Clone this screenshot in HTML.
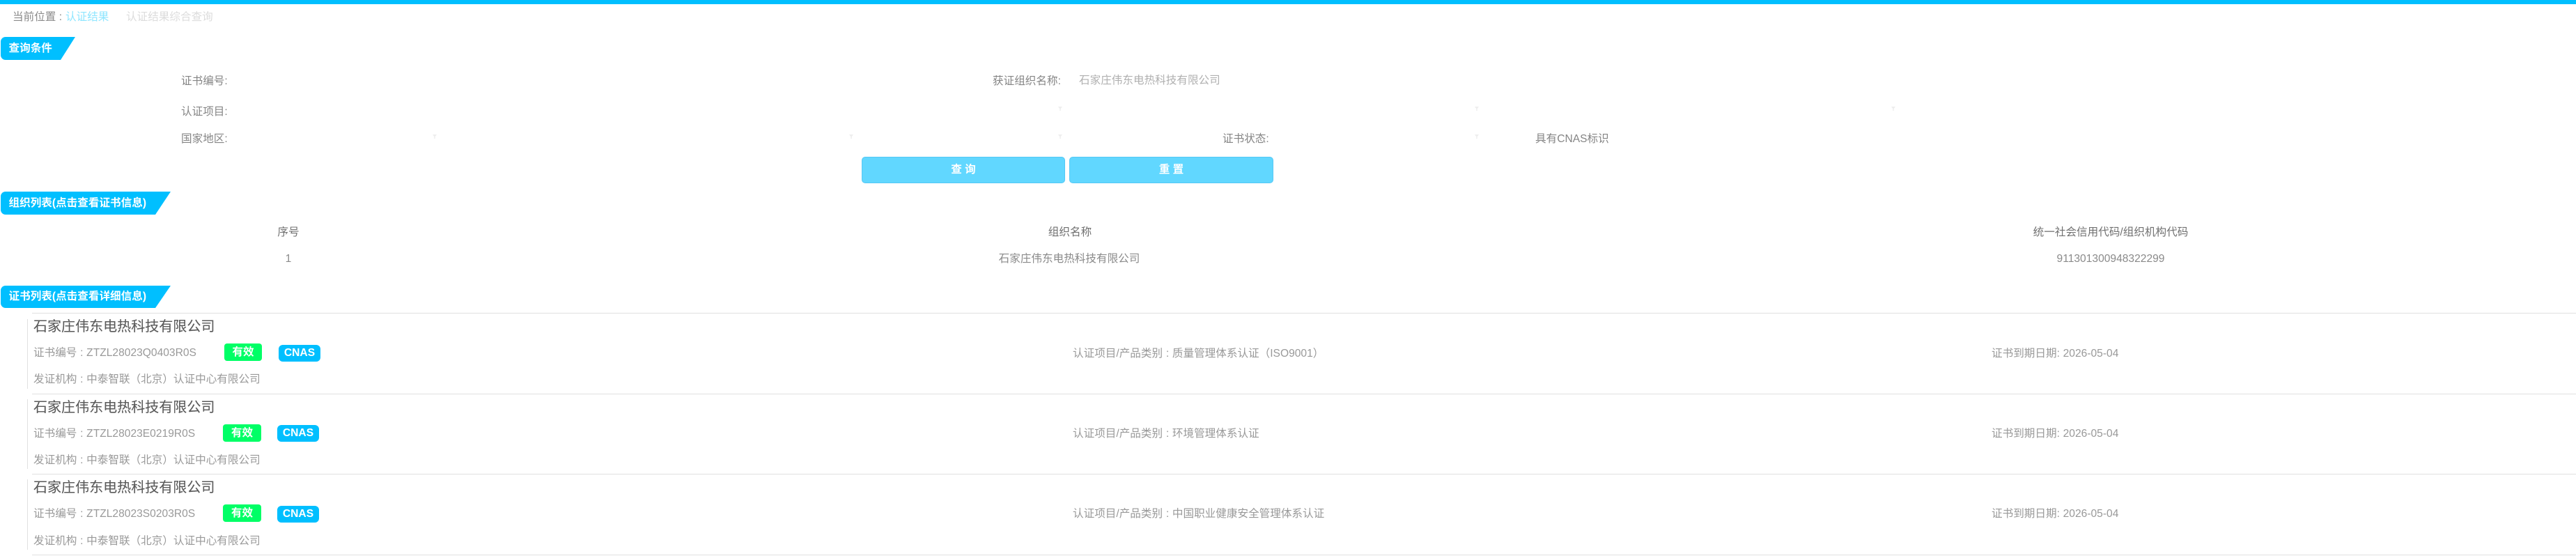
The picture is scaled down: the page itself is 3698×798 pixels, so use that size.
<!DOCTYPE html>
<html lang="zh-CN">
<head>
<meta charset="utf-8">
<title>认证结果综合查询</title>
<style>
html,body{margin:0;padding:0;background:#fff;}
body{position:relative;width:3698px;height:798px;overflow:hidden;font-family:"Liberation Sans","WenQuanYi Zen Hei","Noto Sans CJK SC",sans-serif;font-size:15.6px;color:#666;}
.t{position:absolute;white-space:nowrap;height:24px;line-height:24px;}
.c{transform:translateX(-50%);}
.lab{color:#858585;}
.h{position:absolute;background:#00bfff;color:#fff;font-weight:bold;height:33px;line-height:33px;left:1px;padding-left:11.5px;box-sizing:border-box;border-radius:7px 0 0 7px;white-space:nowrap;}
.btn{position:absolute;top:225px;height:38px;line-height:36px;box-sizing:border-box;background:#61d7ff;border:1px solid #55c8f5;border-radius:5px;color:#fff;font-weight:bold;text-align:center;font-size:15.6px;}
.ln{position:absolute;left:46px;right:0;height:1px;background:#e0e0e0;}
.lf{position:absolute;left:39px;width:1px;background:#e0e0e0;}
.ttl{font-size:20.05px;color:#5a5a5a;-webkit-text-stroke:.12px #5a5a5a;}
.row{color:#999;word-spacing:.4px;}
.g{position:absolute;background:#00ff66;color:#fff;font-weight:bold;border-radius:4px;text-align:center;height:25px;line-height:25px;font-size:15.6px;}
.b{position:absolute;background:#00bfff;color:#fff;font-weight:bold;border-radius:6px;text-align:center;height:24px;line-height:24px;font-size:15.6px;}
svg.f{position:absolute;width:6px;height:6px;}
</style>
</head>
<body>
<div style="position:absolute;left:0;top:0;width:3698px;height:6px;background:#00bfff"></div>

<div class="t" style="left:18px;top:13px;color:#8a8a8a">当前位置 :</div>
<div class="t" style="left:94px;top:13px;color:#8fe6ff">认证结果</div>
<div class="t" style="left:181px;top:13px;color:#dcdcdc">认证结果综合查询</div>

<div class="h" style="top:53px;width:107px;clip-path:polygon(0 0,100% 0,80.4% 100%,0 100%)">查询条件</div>

<div class="t lab" style="left:260px;top:105px">证书编号:</div>
<div class="t lab" style="left:260px;top:149px">认证项目:</div>
<div class="t lab" style="left:260px;top:188px">国家地区:</div>
<div class="t lab" style="left:1425px;top:105px">获证组织名称:</div>
<div class="t" style="left:1549px;top:104px;color:#b0b0b0">石家庄伟东电热科技有限公司</div>
<div class="t lab" style="left:1755px;top:188px">证书状态:</div>
<div class="t lab" style="left:2204px;top:188px">具有CNAS标识</div>

<svg class="f" style="left:621px;top:193px" viewBox="0 0 6 6"><path d="M0 0H6L3.8 3V6H2.2V3Z" fill="#eee"/></svg>
<svg class="f" style="left:1219px;top:193px" viewBox="0 0 6 6"><path d="M0 0H6L3.8 3V6H2.2V3Z" fill="#eee"/></svg>
<svg class="f" style="left:1519px;top:193px" viewBox="0 0 6 6"><path d="M0 0H6L3.8 3V6H2.2V3Z" fill="#eee"/></svg>
<svg class="f" style="left:2117px;top:193px" viewBox="0 0 6 6"><path d="M0 0H6L3.8 3V6H2.2V3Z" fill="#eee"/></svg>
<svg class="f" style="left:1519px;top:153px" viewBox="0 0 6 6"><path d="M0 0H6L3.8 3V6H2.2V3Z" fill="#eee"/></svg>
<svg class="f" style="left:2117px;top:153px" viewBox="0 0 6 6"><path d="M0 0H6L3.8 3V6H2.2V3Z" fill="#eee"/></svg>
<svg class="f" style="left:2715px;top:153px" viewBox="0 0 6 6"><path d="M0 0H6L3.8 3V6H2.2V3Z" fill="#eee"/></svg>

<div class="btn" style="left:1237px;width:292px">查 询</div>
<div class="btn" style="left:1535px;width:293px">重 置</div>

<div class="h" style="top:275px;width:244px;clip-path:polygon(0 0,100% 0,91% 100%,0 100%)">组织列表(点击查看证书信息)</div>

<div class="t c" style="left:414px;top:322px;color:#707070">序号</div>
<div class="t c" style="left:1536px;top:322px;color:#707070">组织名称</div>
<div class="t c" style="left:3030px;top:322px;color:#707070">统一社会信用代码/组织机构代码</div>
<div class="t c" style="left:414px;top:360px;color:#8a8a8a">1</div>
<div class="t c" style="left:1535px;top:360px;color:#8a8a8a">石家庄伟东电热科技有限公司</div>
<div class="t c" style="left:3030px;top:360px;color:#8a8a8a">911301300948322299</div>

<div class="h" style="top:410px;height:32px;line-height:32px;width:244px;clip-path:polygon(0 0,100% 0,91% 100%,0 100%)">证书列表(点击查看详细信息)</div>

<!-- card 1 -->
<div class="ln" style="top:449px"></div>
<div class="lf" style="top:458px;height:100px"></div>
<div class="t ttl" style="left:48px;top:457px">石家庄伟东电热科技有限公司</div>
<div class="t row" style="left:48px;top:495px">证书编号 : ZTZL28023Q0403R0S</div>
<div class="g" style="left:322px;top:493px;width:54px">有效</div>
<div class="b" style="left:400px;top:495px;width:60px">CNAS</div>
<div class="t row" style="left:1540px;top:496px">认证项目/产品类别 : 质量管理体系认证（ISO9001）</div>
<div class="t row" style="left:2859px;top:496px">证书到期日期: 2026-05-04</div>
<div class="t row" style="left:48px;top:533px">发证机构 : 中泰智联（北京）认证中心有限公司</div>
<div class="ln" style="top:565px"></div>

<!-- card 2 -->
<div class="lf" style="top:573px;height:100px"></div>
<div class="t ttl" style="left:48px;top:573px">石家庄伟东电热科技有限公司</div>
<div class="t row" style="left:48px;top:611px">证书编号 : ZTZL28023E0219R0S</div>
<div class="g" style="left:320px;top:609px;width:55px">有效</div>
<div class="b" style="left:398px;top:610px;width:60px">CNAS</div>
<div class="t row" style="left:1540px;top:611px">认证项目/产品类别 : 环境管理体系认证</div>
<div class="t row" style="left:2859px;top:611px">证书到期日期: 2026-05-04</div>
<div class="t row" style="left:48px;top:649px">发证机构 : 中泰智联（北京）认证中心有限公司</div>
<div class="ln" style="top:680px"></div>

<!-- card 3 -->
<div class="lf" style="top:688px;height:101px"></div>
<div class="t ttl" style="left:48px;top:688px">石家庄伟东电热科技有限公司</div>
<div class="t row" style="left:48px;top:726px">证书编号 : ZTZL28023S0203R0S</div>
<div class="g" style="left:320px;top:724px;width:55px">有效</div>
<div class="b" style="left:398px;top:726px;width:60px">CNAS</div>
<div class="t row" style="left:1540px;top:726px">认证项目/产品类别 : 中国职业健康安全管理体系认证</div>
<div class="t row" style="left:2859px;top:726px">证书到期日期: 2026-05-04</div>
<div class="t row" style="left:48px;top:765px">发证机构 : 中泰智联（北京）认证中心有限公司</div>
<div class="ln" style="top:796px"></div>
</body>
</html>
